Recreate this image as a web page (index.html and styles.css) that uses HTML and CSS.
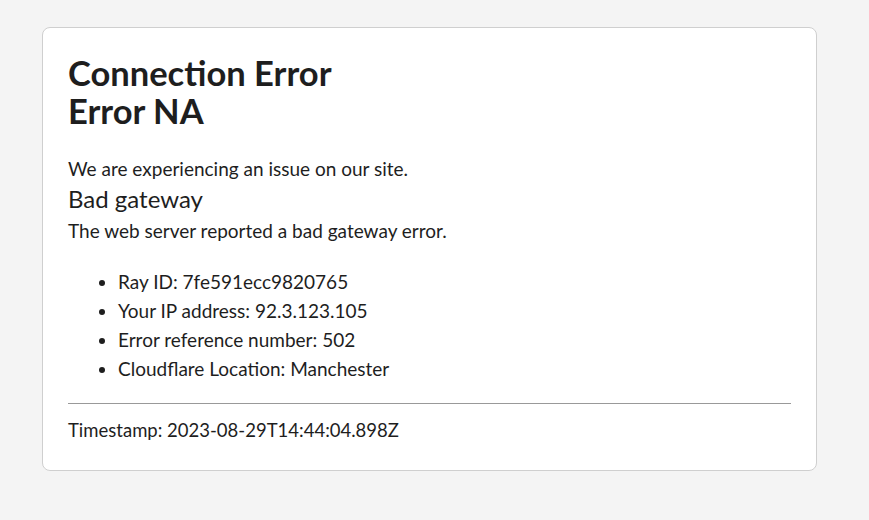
FILE: index.html
```html
<!DOCTYPE html>
<html lang="en">
<head>
<meta charset="utf-8">
<title>Connection Error</title>
<link rel="stylesheet" href="styles.css">
</head>
<body>
<main class="card">
  <h1 class="title">Connection Error<br>Error NA</h1>
  <p class="lead">We are experiencing an issue on our site.</p>
  <h2 class="subtitle">Bad gateway</h2>
  <p class="desc">The web server reported a bad gateway error.</p>
  <ul class="details">
    <li>Ray ID: 7fe591ecc9820765</li>
    <li>Your IP address: 92.3.123.105</li>
    <li>Error reference number: 502</li>
    <li>Cloudflare Location: Manchester</li>
  </ul>
  <hr class="divider">
  <p class="timestamp">Timestamp: 2023-08-29T14:44:04.898Z</p>
</main>
</body>
</html>
```
FILE: styles.css
```css
html, body {
  margin: 0;
  padding: 0;
  background: #f4f4f4;
}
body {
  padding: 27px 0 0 42px;
  font-family: "Lato", "Open Sans", sans-serif;
  color: #1e1e1e;
}
.card {
  box-sizing: border-box;
  width: 775px;
  background: #fff;
  border: 1px solid #cfcfcf;
  border-radius: 8px;
  padding: 26px 25px 26px;
}
.title {
  margin: 0 0 25px;
  font-size: 34.5px;
  line-height: 38px;
  font-weight: 700;
}
.lead {
  margin: 0;
  font-size: 19px;
  line-height: 28px;
}
.subtitle {
  margin: 0;
  font-size: 24px;
  font-weight: 400;
  line-height: 32px;
}
.desc {
  margin: 2px 0 0;
  font-size: 19px;
  line-height: 28px;
}
.details {
  margin: 22px 0 0;
  padding-left: 50px;
  font-size: 19px;
  line-height: 29px;
}
.divider {
  margin: 20px 0 0;
  border: 0;
  border-top: 1px solid #999;
}
.timestamp {
  margin: 12px 0 0;
  font-size: 18.5px;
  line-height: 28px;
}
```
